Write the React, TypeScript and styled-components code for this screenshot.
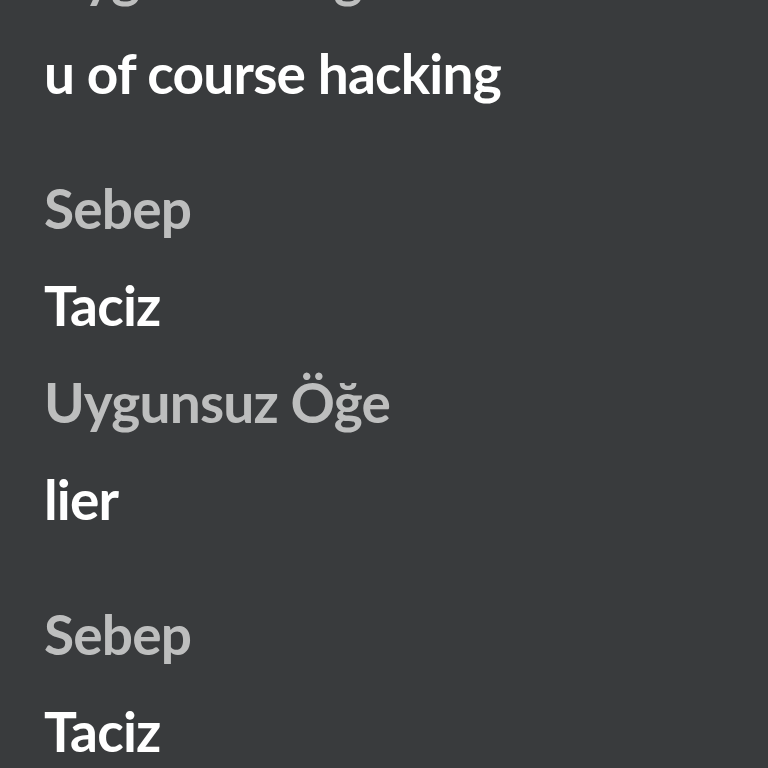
import React from "react";
import styled, { createGlobalStyle } from "styled-components";

const Global = createGlobalStyle`
  html, body {
    margin: 0;
    padding: 0;
    background: #393b3d;
    overflow: hidden;
  }
`;

const Screen = styled.div`
  width: 768px;
  height: 768px;
  background: #393b3d;
  overflow: hidden;
  font-family: Lato, "Noto Sans", sans-serif;
`;

/* list is scrolled: the first report sits partly above the top edge */
const List = styled.div`
  display: flex;
  flex-direction: column;
  gap: 38px;
  padding: 0 44px;
  margin-top: -266px;
`;

const Report = styled.div`
  display: flex;
  flex-direction: column;
`;

const Line = styled.div<{ $label?: boolean }>`
  font-size: 55px;
  line-height: 97px;
  height: 97px;
  font-weight: 700;
  letter-spacing: -0.8px;
  white-space: nowrap;
  color: ${p => (p.$label ? "#bdbebe" : "#ffffff")};
`;

const reports = [
  { reason: "Taciz", item: "u of course hacking" },
  { reason: "Taciz", item: "lier" },
  { reason: "Taciz", item: "" },
];

export default function App() {
  return (
    <Screen>
      <Global />
      <List>
        {reports.map((r, i) => (
          <Report key={i}>
            <Line $label>Sebep</Line>
            <Line>{r.reason}</Line>
            <Line $label>Uygunsuz Öğe</Line>
            <Line>{r.item}</Line>
          </Report>
        ))}
      </List>
    </Screen>
  );
}
